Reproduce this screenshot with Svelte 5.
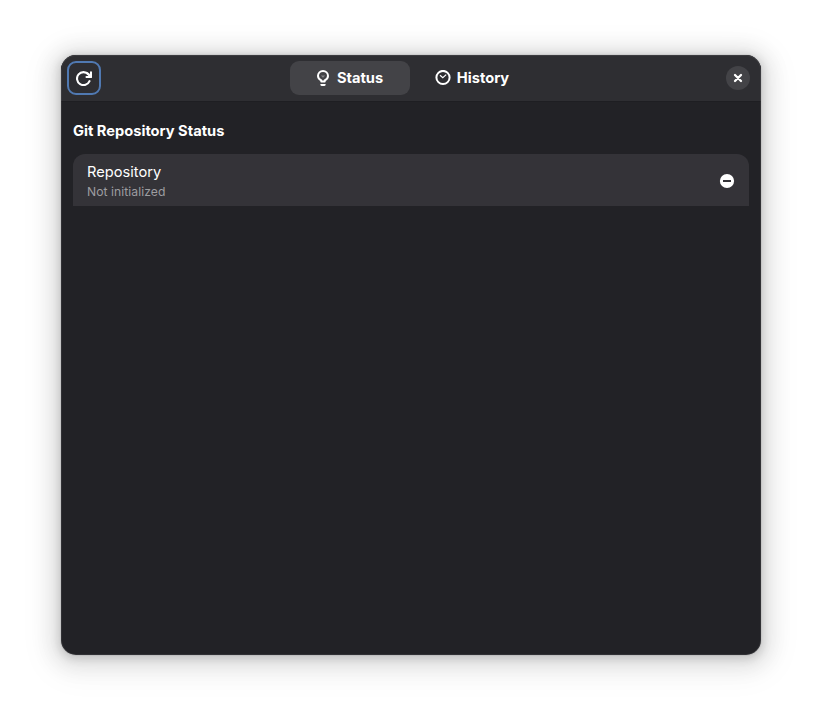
<script>
  let page = $state('status');
</script>

<div class="desktop">
  <main class="window">
    <header>
      <div class="side">
        <button class="refresh" aria-label="Refresh">
          <svg width="16" height="16" viewBox="0 0 16 16">
            <path d="M12.4 4.3A6.5 6.5 0 1 0 13.5 11.2" fill="none" stroke="#fff" stroke-width="2.1" stroke-linecap="round" />
            <path d="M10.5 7H15V2.4M11.3 3.3L14.5 6.5" fill="none" stroke="#fff" stroke-width="2.1" stroke-linecap="round" stroke-linejoin="round" />
          </svg>
        </button>
      </div>
      <nav>
        <button class="tab" class:active={page === 'status'} onclick={() => (page = 'status')}>
          <svg width="16" height="16" viewBox="0 0 16 16">
            <path d="M6.3 11.5V10.3C4.2 9.3 3 7.9 3 6a5 5 0 0 1 10 0c0 1.9-1.2 3.3-3.3 4.3v1.2Z" fill="none" stroke="#fff" stroke-width="2" stroke-linejoin="round" />
            <path d="M5.8 5.6h4.4L8 7.8Z" fill="#fff" opacity=".35" />
            <path d="M5.4 13.9h5.2v.6q0 1.5-1.5 1.5H6.9q-1.5 0-1.5-1.5Z" fill="#fff" />
          </svg>
          <span>Status</span>
        </button>
        <button class="tab" class:active={page === 'history'} onclick={() => (page = 'history')}>
          <svg width="16" height="16" viewBox="0 0 16 16">
            <circle cx="8" cy="7.5" r="6.6" fill="none" stroke="#fff" stroke-width="2" />
            <path d="M5 5.2L7.8 7.8L11.2 4.6" fill="none" stroke="#fff" stroke-width="1.2" />
          </svg>
          <span>History</span>
        </button>
      </nav>
      <div class="side end">
        <button class="close" aria-label="Close">
          <svg width="16" height="16" viewBox="0 0 16 16">
            <path d="M5 5L11 11M11 5L5 11" stroke="#fff" stroke-width="2.3" stroke-linecap="round" />
          </svg>
        </button>
      </div>
    </header>
    <section>
      <h1>Git Repository Status</h1>
      <div class="row">
        <div>
          <div class="title">Repository</div>
          <div class="subtitle">Not initialized</div>
        </div>
        <svg width="16" height="16" viewBox="0 0 16 16">
          <circle cx="8" cy="8" r="7.1" fill="#fff" />
          <path d="M4 8h8" stroke="#343338" stroke-width="2" />
        </svg>
      </div>
    </section>
  </main>
</div>

<style>
  :global(body) {
    background: #fff;
  }
  .desktop {
    box-sizing: border-box;
    width: 822px;
    height: 722px;
    padding: 55px 61px 67px;
    overflow: hidden;
    font-family: Inter, 'Noto Sans', sans-serif;
    font-size: 14.667px;
    color: #fff;
  }
  .window {
    height: 600px;
    border-radius: 15px;
    overflow: hidden;
    background: #222226;
    box-shadow: 0 2px 8px 2px rgba(0, 0, 0, 0.13), 0 3px 20px 10px rgba(0, 0, 0, 0.09),
      0 6px 32px 16px rgba(0, 0, 0, 0.04), 0 0 0 1px rgba(0, 0, 0, 0.05);
    position: relative;
  }
  .window::after {
    content: '';
    position: absolute;
    inset: 0;
    border-radius: 15px;
    box-shadow: inset 0 0 0 1px rgba(255, 255, 255, 0.07);
    pointer-events: none;
  }
  header {
    box-sizing: border-box;
    height: 46px;
    padding: 0 6px;
    display: flex;
    align-items: center;
    background: #2e2e32;
    box-shadow: 0 1px #1e1e22;
  }
  button {
    border: 0;
    margin: 0;
    padding: 0;
    background: none;
    color: inherit;
    font: inherit;
    display: flex;
    align-items: center;
    justify-content: center;
  }
  svg {
    display: block;
    flex: none;
  }
  .side {
    flex: 1 1 0;
    display: flex;
  }
  .end {
    justify-content: flex-end;
  }
  .refresh {
    box-sizing: border-box;
    width: 34px;
    height: 34px;
    border: 2px solid #5079b2;
    border-radius: 9px;
  }
  nav {
    display: flex;
    gap: 3px;
    margin-left: 1px;
  }
  .tab {
    box-sizing: border-box;
    width: 120px;
    height: 34px;
    padding-right: 2px;
    gap: 6px;
    border-radius: 9px;
    font-weight: 700;
  }
  .tab.active {
    background: #434347;
  }
  .close {
    width: 24px;
    height: 24px;
    margin-right: 5px;
    border-radius: 50%;
    background: #434347;
  }
  section {
    padding: 21px 12px 0;
  }
  h1 {
    margin: 0 0 13px;
    font-size: 14.667px;
    line-height: 19px;
    font-weight: 700;
  }
  .row {
    box-sizing: border-box;
    height: 52px;
    padding: 2px 14px 0;
    display: flex;
    align-items: center;
    justify-content: space-between;
    border-radius: 12px 12px 0 0;
    background: #343338;
  }
  .title {
    line-height: 20px;
  }
  .subtitle {
    margin-top: 1px;
    font-size: 12.2px;
    line-height: 17px;
    letter-spacing: 0.04px;
    color: #9d9da0;
  }
</style>
